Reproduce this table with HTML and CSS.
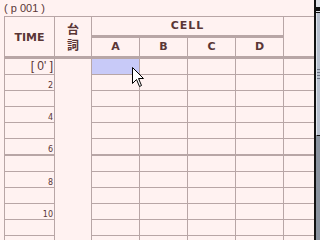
FILE: index.html
```html
<!DOCTYPE html>
<html lang="ja">
<head>
    <meta charset="UTF-8">
    <title>Timesheet p001</title>
    <link rel="stylesheet" href="styles.css">
</head>
<body>
    <div class="page">
        <div class="main">
            <div class="title">( p 001 )</div>
            <div class="sheet">
                <div class="head">
                    <div class="h-time">TIME</div>
                    <div class="h-serif"><span>台</span><span>詞</span></div>
                    <div class="h-cell">
                        <div class="cell-title">CELL</div>
                        <div class="cell-names">
                            <div>A</div>
                            <div>B</div>
                            <div>C</div>
                            <div>D</div>
                        </div>
                    </div>
                    <div class="h-extra"></div>
                </div>
                <div class="rows" id="rows"></div>
            </div>
        </div>
        <div class="scrollbar">
            <div class="sb-up"></div>
            <div class="sb-thumb"><span></span><span></span><span></span><span></span></div>
            <div class="sb-track"></div>
        </div>
    </div>

    <!-- mouse pointer over the selected cell -->
    <svg class="pointer" width="13" height="21" viewBox="0 0 13 21">
        <path d="M0.5 0.5 L0.5 16.5 L4.5 12.5 L7.5 19.5 L9.5 18.5 L6.5 11.5 L11.5 11.5 Z" fill="#fff" stroke="#000" stroke-width="1"/>
    </svg>

<script>
    // frame labels for the TIME column; a heavy rule closes every 6 frames
    const labels = { 1: "[ 0' ]", 2: '2', 4: '4', 6: '6', 8: '8', 10: '10' };
    const rows = document.getElementById('rows');
    for (let i = 1; i <= 12; i++) {
        const row = document.createElement('div');
        row.className = 'row' + (i % 6 === 0 ? ' heavy' : '');
        let label = '';
        if (labels[i]) {
            label = '<span class="' + (i === 1 ? 'sec' : 'num') + '">' + labels[i] + '</span>';
        }
        row.innerHTML =
            '<div class="c-time">' + label + '</div>' +
            '<div class="c-serif"></div>' +
            '<div class="c-cel' + (i === 1 ? ' selected' : '') + '"></div>' +
            '<div class="c-cel"></div>' +
            '<div class="c-cel"></div>' +
            '<div class="c-cel"></div>' +
            '<div class="c-extra"></div>';
        rows.appendChild(row);
    }
</script>
</body>
</html>
```

FILE: styles.css
```css
body {
    margin: 0;
    background-color: #fff2f1;
    color: #5a3636;
    font-family: "DejaVu Sans", sans-serif;
    overflow: hidden;
}

.page {
    display: grid;
    grid-template-columns: 314px 6px;
    width: 320px;
    height: 240px;
    overflow: hidden;
}

.main {
    overflow: hidden;
}

.title {
    height: 16px;
    padding-left: 4px;
    font-family: "Liberation Sans", sans-serif;
    font-size: 11px;
    line-height: 16px;
}

.sheet {
    margin-left: 4px;
    width: 310px;
    box-sizing: border-box;
    border-top: 1px solid #b8a6a6;
    border-left: 1px solid #b8a6a6;
}

/* header */
.head {
    display: flex;
    height: 42px;
    box-sizing: border-box;
    border-bottom: 3px solid #b8a6a6;
    font-weight: bold;
    font-size: 11px;
}

.h-time {
    width: 50px;
    box-sizing: border-box;
    border-right: 1px solid #b8a6a6;
    display: flex;
    align-items: center;
    justify-content: center;
    padding-top: 2px;
}

.h-serif {
    width: 37px;
    box-sizing: border-box;
    border-right: 1px solid #b8a6a6;
    display: flex;
    flex-direction: column;
    align-items: center;
    justify-content: center;
    gap: 4px;
    font-family: "Noto Sans CJK JP", sans-serif;
    font-size: 12px;
    line-height: 12px;
}

.h-cell {
    width: 192px;
    box-sizing: border-box;
    border-right: 1px solid #b8a6a6;
}

.cell-title {
    height: 21px;
    box-sizing: border-box;
    border-bottom: 3px solid #b8a6a6;
    text-align: center;
    line-height: 18px;
    letter-spacing: 1px;
}

.cell-names {
    display: flex;
    height: 18px;
    line-height: 18px;
    text-align: center;
}

.cell-names div {
    width: 48px;
    box-sizing: border-box;
    border-right: 1px solid #b8a6a6;
}

.cell-names div:last-child {
    width: 47px;
    border-right: none;
}

.h-extra {
    width: 30px;
}

/* frame rows */
.row {
    display: flex;
    height: 16px;
}

.row.heavy {
    height: 17px;
}

.row > div {
    box-sizing: border-box;
    border-bottom: 1px solid #b8a6a6;
}

.row.heavy > div {
    border-bottom-width: 2px;
}

.row > .c-serif {
    border-bottom: none;
}

.c-time {
    width: 50px;
    border-right: 1px solid #b8a6a6;
    position: relative;
}

.c-serif {
    width: 37px;
    border-right: 1px solid #b8a6a6;
}

.c-cel {
    width: 48px;
    border-right: 1px solid #b8a6a6;
}

.c-cel.selected {
    background-color: #c8caf8;
}

.c-extra {
    width: 30px;
}

.sec {
    position: absolute;
    right: 1px;
    top: 1px;
    font-family: "Liberation Sans", sans-serif;
    font-size: 12px;
    line-height: 13px;
    white-space: pre;
}

.num {
    position: absolute;
    right: 1px;
    bottom: 0;
    font-size: 8px;
    line-height: 9px;
}

/* scroll bar on the right edge */
.scrollbar {
    box-sizing: border-box;
    border-left: 2px solid #111;
    background-color: #8a929e;
    display: flex;
    flex-direction: column;
}

.sb-up {
    height: 13px;
    flex-shrink: 0;
    box-sizing: border-box;
    border-bottom: 1px solid #111;
    background: linear-gradient(to bottom, #dde0e6 0 7px, #111 7px 11px, #dde0e6 11px);
}

.sb-thumb {
    height: 123px;
    flex-shrink: 0;
    box-sizing: border-box;
    border-bottom: 1px solid #111;
    background-color: #b8c0ce;
    border-left: 1px solid #dfe4ec;
    padding-top: 56px;
}

.sb-thumb span {
    display: block;
    height: 1px;
    margin-bottom: 2px;
    background-color: #6e7686;
}

.sb-track {
    flex: 1;
    background-color: #8a929e;
}

.pointer {
    position: absolute;
    left: 132px;
    top: 67px;
}
```
